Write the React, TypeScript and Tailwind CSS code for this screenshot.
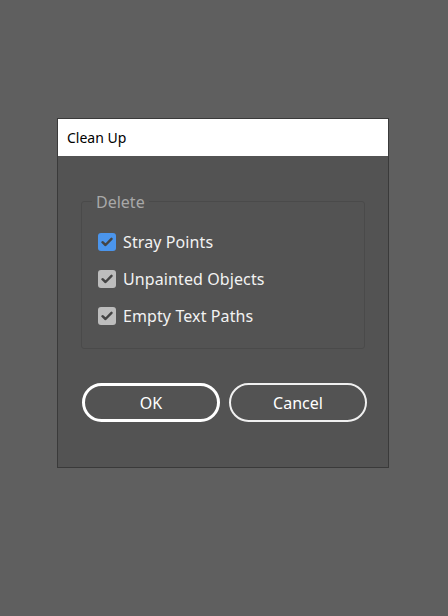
import React, { useState } from "react";

const font = { fontFamily: '"Noto Sans", "Open Sans", sans-serif' };

function Check({ checked, blue }: { checked: boolean; blue?: boolean }) {
  return (
    <span
      className={`flex h-[18px] w-[18px] items-center justify-center rounded-[3px] ${
        blue ? "bg-[#4b95ec]" : "bg-[#bdbdbd]"
      }`}
    >
      {checked && (
        <svg width="12" height="10" viewBox="0 0 12 10">
          <path
            d="M1.5 5.2 L4.5 8 L10.5 1.8"
            fill="none"
            stroke="#444"
            strokeWidth="2.4"
            strokeLinecap="round"
            strokeLinejoin="round"
          />
        </svg>
      )}
    </span>
  );
}

export default function App() {
  const [items] = useState([
    { label: "Stray Points", blue: true },
    { label: "Unpainted Objects" },
    { label: "Empty Text Paths" },
  ]);

  return (
    <div className="flex h-[616px] w-[448px] bg-[#5f5f5f] pl-[57px] pt-[118px]" style={font}>
      <div className="flex h-[350px] w-[332px] flex-col border border-[#3a3a3a] bg-[#535353]">
        <div className="flex h-[37px] items-center bg-white pl-[9px] text-[14px] text-black">
          Clean Up
        </div>

        <div className="px-[23px] pt-[45px]">
          <div className="relative h-[148px] rounded-[3px] border border-[#4a4a4a]">
            <span className="absolute left-[10px] top-[-10px] bg-[#535353] px-[4px] text-[16px] leading-[20px] text-[#a8a8a8]">
              Delete
            </span>
            <div className="flex flex-col gap-[16px] pl-[16px] pt-[29px]">
              {items.map((it) => (
                <label key={it.label} className="flex h-[21px] items-center gap-[7px]">
                  <Check checked blue={it.blue} />
                  <span className="text-[16px] tracking-[0.1px] text-[#f2f2f2]">{it.label}</span>
                </label>
              ))}
            </div>
          </div>
        </div>

        <div className="flex gap-[9px] pl-[24px] pt-[34px]">
          <button className="flex h-[39px] w-[138px] items-center justify-center rounded-full border-[3px] border-white text-[16px] text-white">
            OK
          </button>
          <button className="flex h-[39px] w-[138px] items-center justify-center rounded-full border-2 border-[#f0f0f0] text-[16px] text-white">
            Cancel
          </button>
        </div>
      </div>
    </div>
  );
}
